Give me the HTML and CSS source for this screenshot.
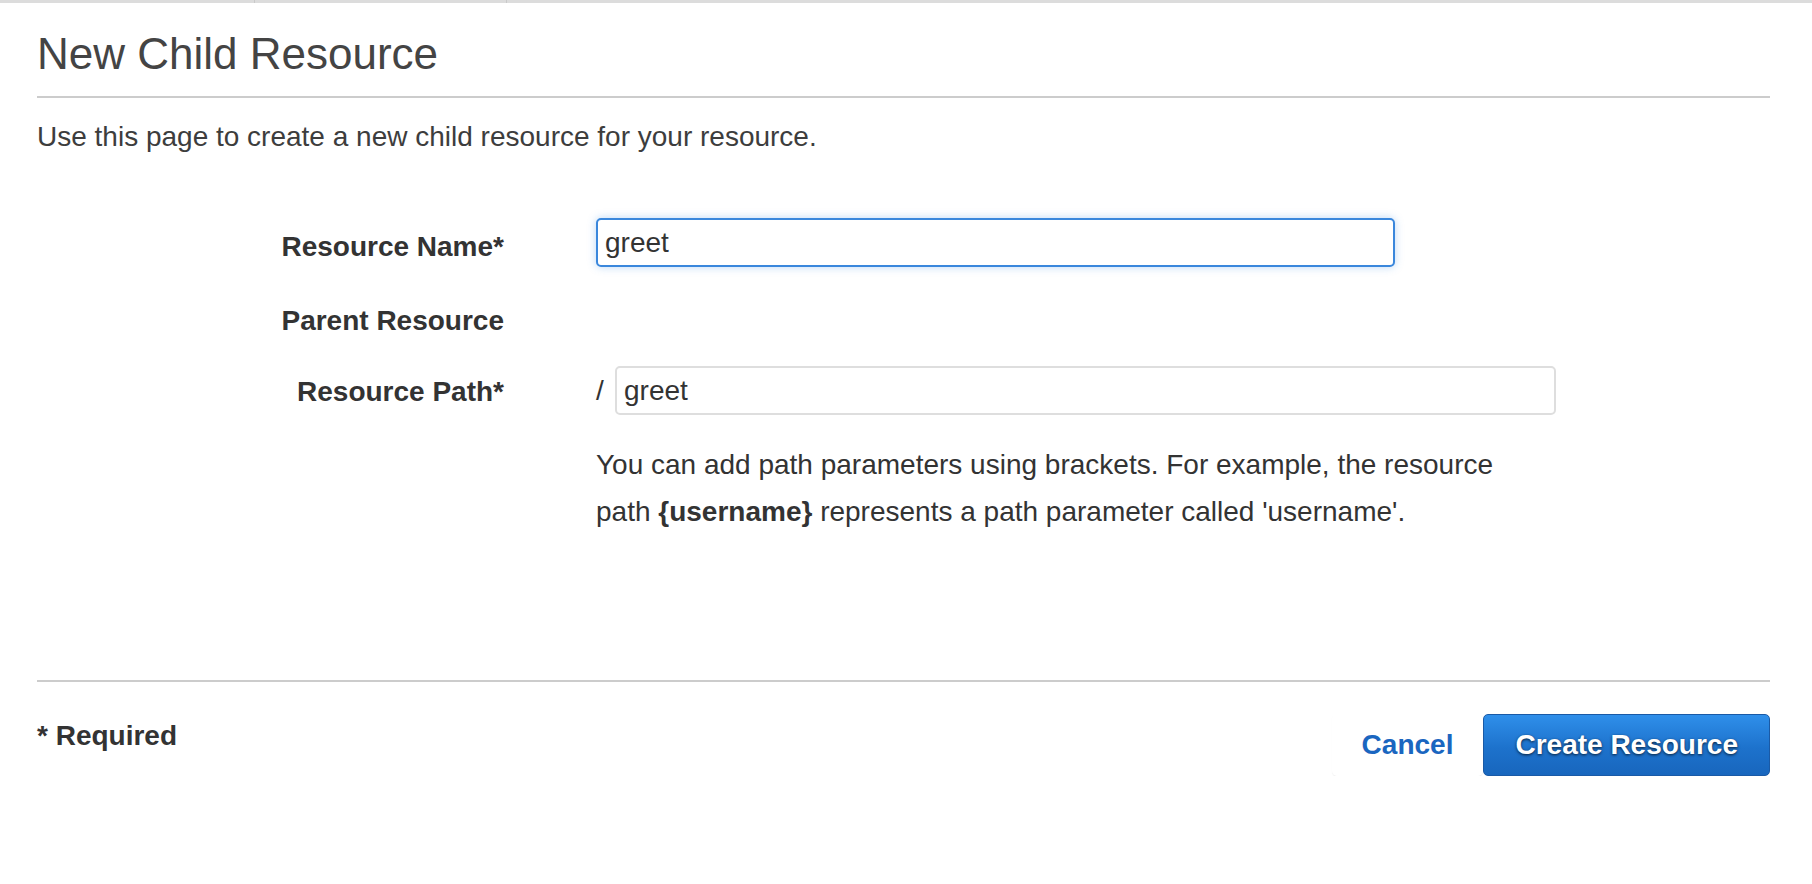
FILE: index.html
```html
<!DOCTYPE html>
<html lang="en">
<head>
<meta charset="utf-8">
<title>New Child Resource</title>
<link rel="stylesheet" href="styles.css">
</head>
<body>
<div class="topstrip">
  <span class="tab tab-a"></span>
  <span class="tab tab-b"></span>
  <span class="tab tab-c"></span>
</div>
<main class="page">
  <h1 class="title">New Child Resource</h1>
  <p class="intro">Use this page to create a new child resource for your resource.</p>

  <div class="form">
    <label class="label row-name" for="rname">Resource Name*</label>
    <div class="field row-name">
      <input id="rname" class="input input-focus" type="text" value="greet">
    </div>

    <div class="label row-parent">Parent Resource</div>
    <div class="field row-parent"></div>

    <label class="label row-path" for="rpath">Resource Path*</label>
    <div class="field row-path">
      <div class="path-line">
        <span class="slash">/</span>
        <input id="rpath" class="input input-path" type="text" value="greet">
      </div>
      <p class="help">You can add path parameters using brackets. For example, the resource<br>path <b>{username}</b> represents a path parameter called 'username'.</p>
    </div>
  </div>

  <div class="footer">
    <div class="required">* Required</div>
    <div class="actions">
      <button class="btn-cancel" type="button">Cancel</button>
      <button class="btn-primary" type="button">Create Resource</button>
    </div>
  </div>
</main>
</body>
</html>
```
FILE: styles.css
```css
* { box-sizing: border-box; }

html, body {
  margin: 0;
  padding: 0;
  background: #ffffff;
}

body {
  font-family: "Liberation Sans", Arial, Helvetica, sans-serif;
  color: #333333;
}

.topstrip {
  display: flex;
  height: 3px;
  background: #dadada;
}

.tab {
  height: 3px;
  background: #dcdcdc;
  border-right: 1px solid #c9c9c9;
}

.tab-a { width: 255px; }
.tab-b { width: 252px; }
.tab-c { flex: 1; border-right: 0; }

.page {
  padding: 0 42px 0 37px;
}

.title {
  margin: 26px 0 0;
  font-size: 44px;
  line-height: 50px;
  font-weight: normal;
  color: #444444;
  padding-bottom: 17px;
  border-bottom: 2px solid #cccccc;
}

.intro {
  margin: 19px 0 0;
  font-size: 28px;
  line-height: 40px;
  color: #3d3d3d;
}

.form {
  display: grid;
  grid-template-columns: 467px 1fr;
  column-gap: 92px;
  margin-top: 61px;
}

.label {
  font-size: 28px;
  font-weight: bold;
  color: #333333;
  text-align: right;
}

.row-name.label {
  line-height: 49px;
  padding-top: 4px;
}

.row-parent {
  margin-top: 30px;
}

.row-parent.label {
  line-height: 40px;
}

.row-path {
  margin-top: 25px;
}

.row-path.label {
  line-height: 49px;
  padding-top: 1px;
}

.input {
  display: block;
  height: 49px;
  border-radius: 5px;
  font-family: "Liberation Sans", Arial, Helvetica, sans-serif;
  font-size: 28px;
  color: #333333;
  padding: 0 0 0 7px;
  outline: none;
  background: #ffffff;
  margin: 0;
}

.input-focus {
  width: 799px;
  border: 2px solid #3a87dc;
  box-shadow: 0 0 9px rgba(58, 140, 230, 0.35);
}

.path-line {
  display: flex;
  align-items: center;
}

.slash {
  font-size: 28px;
  color: #333333;
  width: 19px;
  line-height: 49px;
}

.input-path {
  width: 941px;
  border: 2px solid #dedede;
}

.help {
  margin: 26px 0 0;
  font-size: 28px;
  line-height: 47px;
  color: #333333;
}

.help b {
  font-weight: bold;
}

.footer {
  margin-top: 145px;
  border-top: 2px solid #cccccc;
  padding-top: 32px;
  display: flex;
  justify-content: space-between;
  align-items: flex-start;
}

.required {
  margin-top: 2px;
  font-size: 28px;
  line-height: 40px;
  font-weight: bold;
  color: #333333;
}

.actions {
  display: flex;
  align-items: center;
}

.btn-cancel {
  height: 62px;
  padding: 0 30px;
  font-family: "Liberation Sans", Arial, Helvetica, sans-serif;
  font-size: 28px;
  font-weight: bold;
  color: #1a66c0;
  background: #ffffff;
  border: 0;
  border-radius: 5px;
  box-shadow: 0 1px 1px rgba(0, 0, 0, 0.06);
  cursor: pointer;
}

.btn-primary {
  height: 62px;
  padding: 0 31px;
  font-family: "Liberation Sans", Arial, Helvetica, sans-serif;
  font-size: 28px;
  font-weight: bold;
  color: #ffffff;
  background: linear-gradient(to bottom, #2f8fea 0%, #1d72cc 55%, #1866bd 100%);
  border: 1px solid #1a5aa6;
  border-radius: 5px;
  text-shadow: 0 1px 3px rgba(0, 0, 0, 0.75);
  cursor: pointer;
}
```
